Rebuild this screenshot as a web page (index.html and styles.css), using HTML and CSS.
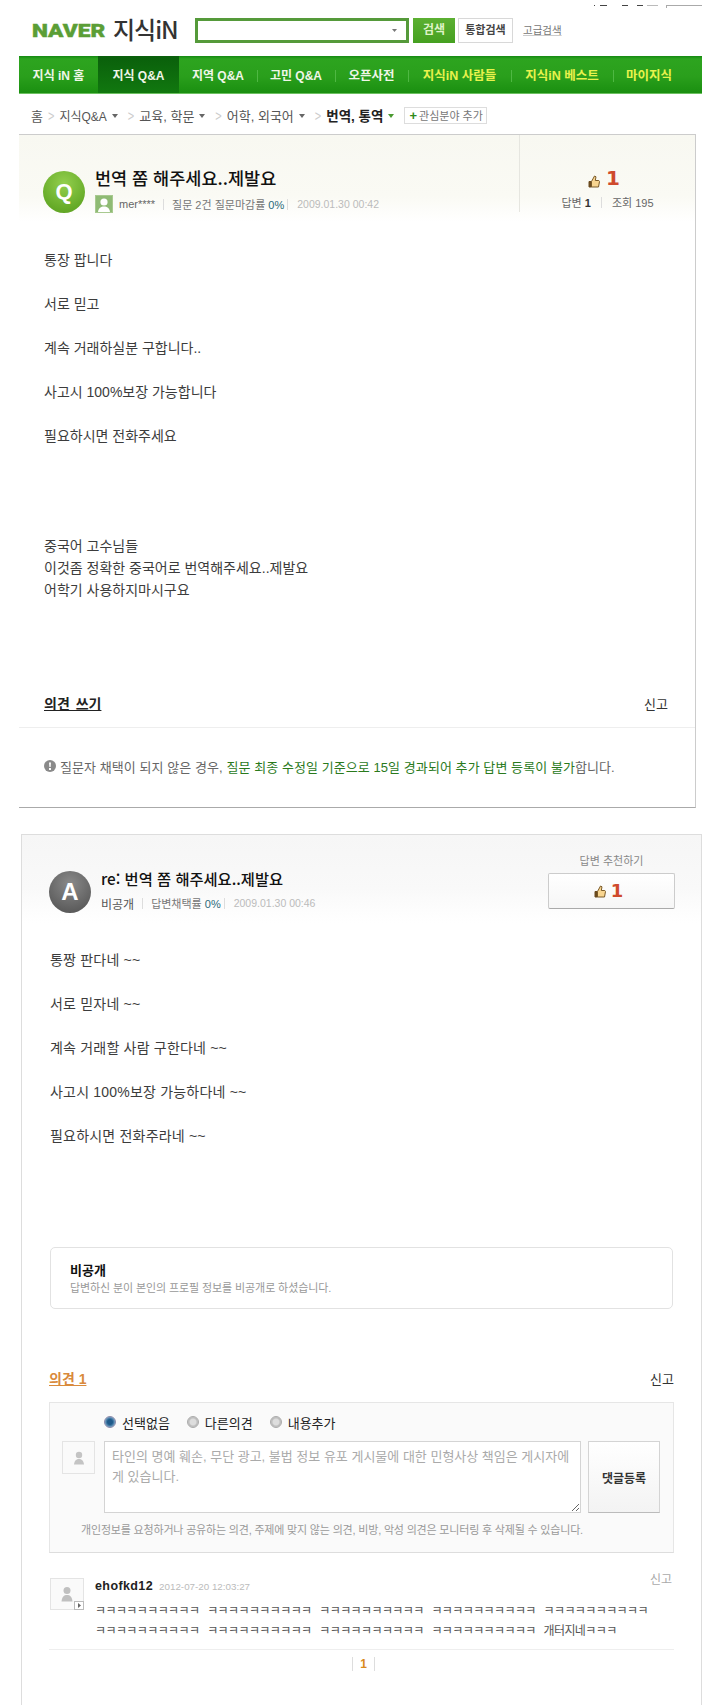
FILE: index.html
```html
<!DOCTYPE html>
<html lang="ko">
<head>
<meta charset="utf-8">
<title>지식iN</title>
<link rel="stylesheet" href="styles.css">
</head>
<body>
<div class="page">
  <div class="topbar">
    <i class="dash d1"></i><i class="dash d2"></i><i class="dash d3"></i><i class="dash d4"></i><i class="dash d5"></i><i class="dash d6"></i>
  </div>
  <header class="header">
    <div class="logo"><span class="naver">NAVER</span><span class="kin">지식iN</span></div>
    <div class="searchbox"><svg class="caret" width="5" height="3" viewBox="0 0 5 3"><path d="M0 0h5L2.5 3z" fill="#777"/></svg></div>
    <div class="btn-search">검색</div>
    <div class="btn-all">통합검색</div>
    <a class="adv">고급검색</a>
  </header>
  <nav class="nav">
    <a class="nav-item w79">지식 iN 홈</a>
    <a class="nav-item w81 active">지식 Q&amp;A</a>
    <a class="nav-item w78">지역 Q&amp;A</a>
    <a class="nav-item w78 sep">고민 Q&amp;A</a>
    <a class="nav-item w73 sep">오픈사전</a>
    <a class="nav-item w103 sep yellow">지식iN 사람들</a>
    <a class="nav-item w102 sep yellow">지식iN 베스트</a>
    <a class="nav-item w72 sep yellow">마이지식</a>
  </nav>
  <div class="crumbs">
    <span>홈</span><span class="gt">&gt;</span>
    <span class="qa">지식Q&amp;A</span><span class="tri"></span><span class="gt">&gt;</span>
    <span>교육, 학문</span><span class="tri"></span><span class="gt">&gt;</span>
    <span>어학, 외국어</span><span class="tri"></span><span class="gt">&gt;</span>
    <strong>번역, 통역</strong><span class="tri green"></span>
    <span class="addfield"><b>+</b> 관심분야 추가</span>
  </div>

  <section class="qcard">
    <div class="qhead">
      <div class="qhead-main">
        <div class="badge badge-q">Q</div>
        <div class="qinfo">
          <h1 class="qtitle">번역 쫌 해주세요..제발요</h1>
          <div class="meta">
            <svg class="miniav" width="18" height="18" viewBox="0 0 18 18"><rect width="18" height="18" fill="#a8c98f"/><rect x="1" y="1" width="16" height="16" fill="#8fbb74"/><circle cx="9" cy="7" r="3.6" fill="#fff"/><path d="M3 17c.5-4 3-5.500 6-5.500s5.500 1.500 6 5.500z" fill="#fff"/></svg>
            <span class="who">mer****</span><i class="vsep"></i>
            <span>질문 2건 질문마감률 <em class="pct">0%</em></span><i class="vsep s2"></i>
            <span class="date">2009.01.30 00:42</span>
          </div>
        </div>
      </div>
      <div class="qstats">
        <div class="likes">
          <svg class="thumb" width="12" height="13" viewBox="0 0 12 13"><path d="M1 6.500h2.500V12H1z" fill="#6b4a1e" stroke="#6b4a1e"/><path d="M3.500 6.500 6.500 1l1.500.8-.7 3.700h3.500l.7 1-1 5.500H3.500z" fill="#f8d590" stroke="#7a5a28"/></svg>
          <span class="count">1</span>
        </div>
        <div class="statline">답변 <b>1</b><i class="vsep s3"></i>조회 195</div>
      </div>
    </div>
    <div class="qbody">
      통장 팝니다<br><br>서로 믿고<br><br>계속 거래하실분 구합니다..<br><br>사고시 100%보장 가능합니다<br><br>필요하시면 전화주세요<br><br><br><br><br>중국어 고수님들<br>이것좀 정확한 중국어로 번역해주세요..제발요<br>어학기 사용하지마시구요
    </div>
    <div class="actions">
      <a class="opinion-write">의견 쓰기</a>
      <a class="report">신고</a>
    </div>
    <div class="notice">
      <svg width="12" height="12" viewBox="0 0 12 12"><circle cx="6" cy="6" r="6" fill="#8a8a8a"/><path d="M5 2.500h2L6.600 7H5.400zM5 8h2v2H5z" fill="#fff"/></svg>
      <span>질문자 채택이 되지 않은 경우, <span class="green-t">질문 최종 수정일 기준으로 15일 경과되어 추가 답변 등록이 불가</span>합니다.</span>
    </div>
  </section>

  <section class="acard">
    <div class="ahead">
      <div class="badge badge-a">A</div>
      <div class="ainfo">
        <h2 class="atitle">re: 번역 쫌 해주세요..제발요</h2>
        <div class="meta ameta">
          <span class="who2">비공개</span><i class="vsep"></i>
          <span>답변채택률 <em class="pct">0%</em></span><i class="vsep s2"></i>
          <span class="date">2009.01.30 00:46</span>
        </div>
      </div>
      <div class="recommend">
        <div class="rec-label">답변 추천하기</div>
        <div class="rec-btn">
          <svg class="thumb" width="12" height="13" viewBox="0 0 12 13"><path d="M1 6.500h2.500V12H1z" fill="#6b4a1e" stroke="#6b4a1e"/><path d="M3.500 6.500 6.500 1l1.500.8-.7 3.700h3.500l.7 1-1 5.500H3.500z" fill="#f8d590" stroke="#7a5a28"/></svg>
          <span class="count small">1</span>
        </div>
      </div>
    </div>
    <div class="abody">
      통짱 판다네 ~~<br><br>서로 믿자네 ~~<br><br>계속 거래할 사람 구한다네 ~~<br><br>사고시 100%보장 가능하다네 ~~<br><br>필요하시면 전화주라네 ~~
    </div>
    <div class="private">
      <strong>비공개</strong>
      <span>답변하신 분이 본인의 프로필 정보를 비공개로 하셨습니다.</span>
    </div>
    <div class="op-head">
      <a class="op-count">의견 1</a>
      <a class="report">신고</a>
    </div>
    <div class="form">
      <div class="radios">
        <span class="radio on"></span><span class="rlabel">선택없음</span>
        <span class="radio"></span><span class="rlabel">다른의견</span>
        <span class="radio"></span><span class="rlabel">내용추가</span>
      </div>
      <div class="form-row">
        <div class="person-box">
          <svg width="12" height="14" viewBox="0 0 12 14"><circle cx="6" cy="4" r="3.200" fill="#c4c4c4"/><path d="M1 13.500c.4-4 2.500-5.500 5-5.500s4.600 1.500 5 5.500z" fill="#c4c4c4"/></svg>
        </div>
        <textarea class="ta" placeholder="타인의 명예 훼손, 무단 광고, 불법 정보 유포 게시물에 대한 민형사상 책임은 게시자에게 있습니다."></textarea>
        <div class="submit">댓글등록</div>
      </div>
      <p class="hint">개인정보를 요청하거나 공유하는 의견, 주제에 맞지 않는 의견, 비방, 악성 의견은 모니터링 후 삭제될 수 있습니다.</p>
    </div>
    <div class="comment">
      <div class="person-box big">
        <svg width="12" height="16" viewBox="0 0 12 16"><circle cx="6" cy="4.500" r="3.500" fill="#c0c0c0"/><path d="M.5 15.500C1 10.500 3 9 6 9s5 1.500 5.500 6.500z" fill="#c0c0c0"/></svg>
        <span class="plus"><svg width="3" height="5" viewBox="0 0 3 5"><path d="M0 0l3 2.500L0 5z" fill="#666"/></svg></span>
      </div>
      <div class="c-main">
        <div class="c-top"><b class="c-name">ehofkd12</b><span class="c-date">2012-07-20 12:03:27</span><a class="c-report">신고</a></div>
        <div class="c-text">ㅋㅋㅋㅋㅋㅋㅋㅋㅋㅋ ㅋㅋㅋㅋㅋㅋㅋㅋㅋㅋ ㅋㅋㅋㅋㅋㅋㅋㅋㅋㅋ ㅋㅋㅋㅋㅋㅋㅋㅋㅋㅋ ㅋㅋㅋㅋㅋㅋㅋㅋㅋㅋ<br>ㅋㅋㅋㅋㅋㅋㅋㅋㅋㅋ ㅋㅋㅋㅋㅋㅋㅋㅋㅋㅋ ㅋㅋㅋㅋㅋㅋㅋㅋㅋㅋ ㅋㅋㅋㅋㅋㅋㅋㅋㅋㅋ 개터지네ㅋㅋㅋ</div>
      </div>
    </div>
    <div class="pager"><span class="pg">1</span></div>
  </section>
</div>
</body>
</html>
```

FILE: styles.css
```css
* { box-sizing: border-box; }
html, body { margin: 0; padding: 0; background: #fff; }
body {
  font-family: "Liberation Sans", "Noto Sans CJK KR", sans-serif;
  color: #333;
  font-size: 13px;
}
i, em { font-style: normal; }
h1, h2, p { margin: 0; font-weight: normal; }
.page { width: 711px; height: 1705px; overflow: hidden; }

/* clipped fragments at the very top */
.topbar { height: 8px; display: flex; padding: 5px 0 0 594px; align-items: flex-start; }
.dash { display: block; height: 1px; background: #444; }
.d1 { width: 1px; }
.d2 { width: 7px; margin-left: 5px; }
.d3 { width: 6px; margin-left: 15px; }
.d4 { width: 6px; margin-left: 9px; }
.d5 { width: 11px; margin-left: 4px; background: #bbb; }
.d6 { width: 36px; margin-left: 8px; height: 3px; background: none; border-top: 1px solid #aaa; border-left: 1px solid #aaa; }

/* header */
.header { height: 48px; display: flex; align-items: flex-start; padding: 10px 0 0 32px; }
.logo { width: 163px; height: 25px; display: flex; align-items: center; }
.naver {
  display: inline-block; width: 81px; font-family: Roboto, "Liberation Sans", sans-serif;
  font-weight: 900; font-size: 18px; color: #5b9e36; -webkit-text-stroke: .4px #5b9e36;
  transform: scaleX(1.26); transform-origin: left center;
}
.kin { font-family: "Noto Sans CJK KR", sans-serif; font-size: 24px; color: #333; letter-spacing: -1px; font-weight: 500; margin-bottom: 5px; }
.searchbox {
  width: 214px; height: 25px; border: 3px solid #559a3a; background: #fff;
  display: flex; align-items: center; justify-content: flex-end; padding-right: 9px;
}
.btn-search {
  width: 42px; height: 25px; margin-left: 4px; background: linear-gradient(#5cb032, #45a020);
  color: #dff3c8; font-size: 12px; font-weight: bold; text-align: center; line-height: 25px;
}
.btn-all {
  width: 55px; height: 25px; margin-left: 3px; border: 1px solid #d8d8d8; background: #fff;
  color: #444; font-size: 11px; font-weight: bold; text-align: center; line-height: 23px;
}
.adv { margin-left: 10px; font-size: 10.500px; color: #777; line-height: 25px; text-decoration: underline; text-decoration-color: #ccc; }

/* nav */
.nav {
  width: 683px; height: 38px; margin-left: 19px; display: flex;
  background: linear-gradient(#158a12 0, #2da41f 8%, #2a9f1c 55%, #1a8f10 100%);
  border-bottom: 1px solid #6cc060;
}
.nav-item {
  display: flex; align-items: center; justify-content: center; position: relative;
  color: #f0f6e8; font-size: 12px; font-weight: bold; white-space: nowrap;
}
.w79 { width: 79px; } .w81 { width: 81px; } .w78 { width: 78px; } .w73 { width: 73px; font-size: 12.500px; }
.w103 { width: 103px; } .w102 { width: 102px; } .w72 { width: 72px; }
.active { background: linear-gradient(#0a5f0b, #11780f); }
.yellow { color: #e8f24c; font-size: 12.500px; }
.sep::before {
  content: ""; position: absolute; left: 0; top: 14px; height: 12px; width: 1px; background: #4fb843;
}

/* breadcrumb */
.crumbs {
  height: 40px; display: flex; align-items: center; padding: 2px 0 0 31px; font-size: 13px; color: #555; white-space: nowrap;
}
.crumbs strong { color: #222; font-size: 13.500px; }
.qa { font-size: 12px; }
.gt { color: #ccc; font-size: 11px; margin: 0 5px; transform: scaleY(1.4); }
.tri { width: 0; height: 0; border: 3px solid transparent; border-top: 4px solid #666; border-bottom: 0; margin: 2px 5px 0 5px; }
.tri.green { border-top-color: #4a9a30; margin-right: 7px; }
.addfield {
  height: 17px; margin-left: 3px; padding: 0 3px 0 4px; border: 1px solid #ddd; font-size: 11px; color: #777;
  display: flex; align-items: center; gap: 2px; background: #fff;
}
.addfield b { color: #2f8a1a; font-size: 13px; }

/* question card */
.qcard {
  width: 677px; margin-left: 19px; height: 674px; border: 1px solid #ccc; border-left: 0; border-bottom-color: #aaa;
}
.qhead {
  height: 87px; display: flex; justify-content: space-between;
  background: linear-gradient(#f8f8f1 0, #fafaf4 70%, #fff 100%);
}
.qhead-main { display: flex; padding: 36px 0 0 24px; }
.badge {
  width: 42px; height: 42px; border-radius: 50%; color: #fff; font-size: 22px; font-weight: bold;
  display: flex; align-items: center; justify-content: center; flex: none;
}
.badge-q { background: radial-gradient(circle at 50% 30%, #93cf4e, #66ab28 70%, #5a9c20); }
.badge-a { background: radial-gradient(circle at 50% 30%, #8a8a8a, #5d5d5d 75%, #4f4f4f); font-size: 24px; }
.qinfo { margin-left: 10px; }
.qtitle { font-size: 17.500px; line-height: 22px; color: #111; margin-top: -4px; font-family: "Noto Sans CJK KR", sans-serif; font-weight: 500; }
.meta { display: flex; align-items: center; height: 18px; font-size: 11px; color: #777; margin-top: 6px; white-space: nowrap; }
.miniav { margin-right: 6px; flex: none; }
.who { color: #666; }
.who2 { color: #555; font-size: 12px; }
.pct { color: #2b6a7a; }
.vsep { display: inline-block; width: 1px; height: 11px; background: #ddd; margin: 0 8px; }
.vsep.s2 { margin: 0 9px 0 3px; }
.vsep.s3 { margin: 0 10px; vertical-align: -1px; }
.date { color: #bbb; font-size: 10.500px; }
.qstats { width: 176px; border-left: 1px solid #e6e6e0; padding-top: 33px; text-align: center; height: 77px; }
.likes { display: flex; justify-content: center; align-items: flex-end; gap: 6px; height: 20px; padding-right: 7px; }
.count { font-family: "DejaVu Sans", sans-serif; font-weight: bold; font-size: 20px; line-height: 20px; color: #cf4a2c; }
.count.small { font-size: 18px; }
.statline { margin-top: 8px; font-size: 11px; color: #666; line-height: 14px; }
.statline b { color: #333; }
.qbody { padding: 27px 0 0 25px; height: 379px; font-size: 14px; line-height: 22px; color: #3c3c3c; }
.actions { height: 127px; display: flex; justify-content: space-between; align-items: flex-end; padding: 0 27px 14px 25px; border-bottom: 1px solid #eee; font-size: 13px; }
.opinion-write { font-weight: bold; color: #222; text-decoration: underline; font-size: 14px; word-spacing: 2px; }
.report { color: #333; }
.notice { height: 79px; display: flex; align-items: center; padding: 0 0 3px 25px; gap: 4px; font-size: 13px; color: #666; letter-spacing: .07px; }
.green-t { color: #2a7a1c; }

/* answer card */
.acard {
  width: 681px; margin: 26px 0 0 21px; height: 880px; border: 1px solid #ddd; border-bottom: 0;
}
.ahead {
  height: 88px; display: flex; padding: 36px 26px 0 27px;
  background: linear-gradient(#f6f6f6 0, #f9f9f9 60%, #fff 100%);
}
.ainfo { margin-left: 10px; flex: 1; }
.atitle { font-size: 15.300px; line-height: 20px; font-weight: 500; font-family: "Noto Sans CJK KR", sans-serif; color: #111; margin-top: -3px; }
.ameta { margin-top: 6px; }
.recommend { width: 127px; margin-top: -20px; text-align: center; }
.rec-label { font-size: 11px; color: #888; line-height: 20px; }
.rec-btn {
  height: 36px; margin-top: 2px; border: 1px solid #ccc; border-bottom-color: #aaa; border-radius: 2px;
  background: linear-gradient(#fff, #f6f6f6); display: flex; align-items: center; justify-content: center; gap: 5px; padding-right: 6px;
}
.abody { padding: 26px 0 0 28px; height: 324px; font-size: 14px; line-height: 22px; color: #3c3c3c; letter-spacing: .2px; }
.private {
  width: 623px; height: 62px; margin-left: 28px; border: 1px solid #e2e2e2; border-radius: 5px;
  padding: 14px 0 0 19px; display: flex; flex-direction: column;
}
.private strong { font-size: 13px; color: #111; line-height: 18px; }
.private span { font-size: 11px; color: #999; line-height: 17px; letter-spacing: -.1px; }
.op-head {
  width: 625px; margin: 59px 0 0 27px; height: 20px; display: flex; justify-content: space-between; align-items: center; font-size: 13px;
}
.op-count { color: #d98a3c; font-weight: bold; text-decoration: underline; font-size: 14px; }
.form {
  width: 625px; height: 151px; margin: 14px 0 0 27px; border: 1px solid #e6e6e6; border-bottom-color: #ddd; background: #fafafa;
}
.radios { height: 38px; display: flex; align-items: center; padding-left: 54px; font-size: 13px; color: #222; }
.radio {
  width: 12px; height: 12px; border-radius: 50%; border: 1px solid #aaa;
  background: radial-gradient(circle, #ddd 40%, #bbb 60%, #f5f5f5 100%);
}
.radio.on { background: radial-gradient(circle, #1f5a8a 35%, #4a80aa 55%, #dde8f0 100%); border-color: #88a; }
.rlabel { margin: 0 17px 0 6px; }
.form-row { display: flex; align-items: flex-start; padding-left: 12px; }
.person-box {
  width: 33px; height: 33px; border: 1px solid #e4e4e4; background: #fafafa; display: flex; align-items: center; justify-content: center; flex: none;
}
.ta {
  display: block; width: 477px; height: 72px; margin: 0 0 0 9px; padding: 5px 7px; border: 1px solid #d4d4d4; background: #fff;
  font: 13px/20px "Liberation Sans", "Noto Sans CJK KR", sans-serif; outline: 0; flex: none; word-break: break-all;
}
.ta::placeholder { color: #aaa; opacity: 1; }
.submit {
  width: 72px; height: 72px; margin-left: 7px; border: 1px solid #d4d4d4; border-bottom-color: #bbb; background: linear-gradient(#fff, #f3f3f3);
  font-size: 12px; font-weight: bold; color: #333; display: flex; align-items: center; justify-content: center; flex: none;
}
.hint { font-size: 11px; color: #999; line-height: 16px; margin-top: 9px; padding-left: 31px; white-space: nowrap; letter-spacing: -.18px; }
.comment { display: flex; margin: 25px 0 0 28px; width: 622px; height: 71px; }
.person-box.big { position: relative; width: 34px; height: 32px; }
.plus {
  position: absolute; right: -1px; bottom: -1px; width: 10px; height: 9px; border: 1px solid #bbb; background: #fff;
  display: flex; align-items: center; justify-content: center;
}
.c-main { margin-left: 11px; flex: 1; }
.c-top { display: flex; align-items: baseline; line-height: 16px; }
.c-name { font-size: 12.500px; color: #222; letter-spacing: .4px; }
.c-date { font-size: 9.800px; color: #bbb; margin-left: 6px; }
.c-report { margin-left: auto; font-size: 12px; color: #aaa; position: relative; top: -6px; }
.c-text { margin-top: 6px; font-size: 12px; line-height: 20px; color: #555; white-space: nowrap; letter-spacing: -.6px; word-spacing: 5px; }
.pager {
  width: 625px; margin-left: 27px; border-top: 1px solid #eee; height: 30px; padding: 7px 0 0 4px; display: flex; justify-content: center;
}
.pg { width: 23px; height: 14px; border-left: 1px solid #ddd; border-right: 1px solid #ddd; text-align: center; color: #d98a1c; font-size: 12px; font-weight: bold; line-height: 14px; }
```
